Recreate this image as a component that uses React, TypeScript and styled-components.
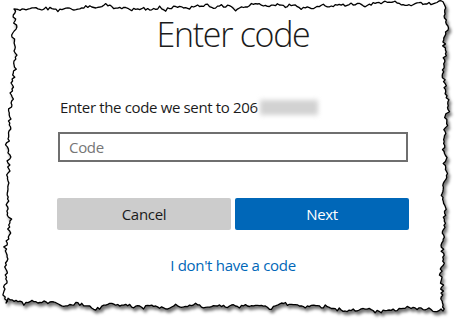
import styled, { createGlobalStyle } from 'styled-components';

const GlobalStyle = createGlobalStyle`
  html, body {
    margin: 0;
    padding: 0;
    background: #fff;
  }
  body {
    font-family: 'Open Sans', 'Liberation Sans', sans-serif;
    color: #1b1b1b;
  }
`;

// torn paper edge, drawn once from a seeded random walk
const mulberry32 = (seed: number) => () => {
  seed |= 0;
  seed = (seed + 0x6d2b79f5) | 0;
  let t = Math.imul(seed ^ (seed >>> 15), 1 | seed);
  t = (t + Math.imul(t ^ (t >>> 7), 61 | t)) ^ t;
  return ((t ^ (t >>> 14)) >>> 0) / 4294967296;
};

const rand = mulberry32(11);

const edge = (x0: number, y0: number, x1: number, y1: number, amp: number) => {
  const len = Math.hypot(x1 - x0, y1 - y0);
  const n = Math.round(len / 2);
  const nx = -(y1 - y0) / len;
  const ny = (x1 - x0) / len;
  const pts: string[] = [];
  let walk = 0;
  for (let i = 1; i <= n; i++) {
    const t = i / n;
    walk += (rand() - 0.5) * amp;
    walk *= 0.9;
    const off = i === n ? 0 : walk + (rand() - 0.5) * amp * 0.7;
    pts.push(`${(x0 + (x1 - x0) * t + nx * off).toFixed(1)},${(y0 + (y1 - y0) * t + ny * off).toFixed(1)}`);
  }
  return pts.join(' L');
};

const corners: [number, number][] = [
  [14, 9],
  [445, 6],
  [443, 311],
  [6, 303]
];

const tornPath =
  `M${corners[0][0]},${corners[0][1]} L` +
  corners
    .map((c, i) => {
      const next = corners[(i + 1) % corners.length];
      return edge(c[0], c[1], next[0], next[1], 3.2);
    })
    .join(' L') +
  ' Z';

const Page = styled.div`
  position: relative;
  width: 462px;
  height: 326px;
  overflow: hidden;
  background: #fff;
`;

const Frame = styled.svg`
  position: absolute;
  inset: 0;
`;

const Form = styled.main`
  position: relative;
  width: 352px;
  margin-left: 57px;
  padding-top: 14px;
  display: flex;
  flex-direction: column;
`;

const Title = styled.h1`
  margin: 0;
  font-size: 34px;
  font-weight: 300;
  line-height: 40px;
  letter-spacing: -1.3px;
  text-align: center;
  color: #1b1b1b;
`;

const Prompt = styled.p`
  margin: 43px 0 0 3px;
  font-size: 15px;
  line-height: 20px;
  letter-spacing: -0.35px;
  display: flex;
  align-items: center;
`;

const Smudge = styled.span`
  display: inline-block;
  width: 58px;
  height: 15px;
  margin-left: 2px;
  background: #d2d2d2;
  filter: blur(2.5px);
`;

const CodeInput = styled.input`
  box-sizing: border-box;
  width: 350px;
  height: 30px;
  margin: 15px 0 0 1px;
  padding: 0 9px;
  border: 2px solid #6f6f6f;
  background: #fff;
  font-family: inherit;
  font-size: 15px;
  letter-spacing: -0.3px;
  color: #1b1b1b;
  outline: none;

  &::placeholder {
    color: #767676;
  }
`;

const Buttons = styled.div`
  display: grid;
  grid-template-columns: 1fr 1fr;
  gap: 4px;
  margin-top: 36px;
`;

const Button = styled.button<{ $primary?: boolean }>`
  height: 32px;
  border: none;
  border-radius: 2px;
  font-family: inherit;
  font-size: 15px;
  letter-spacing: -0.3px;
  background: ${(p) => (p.$primary ? '#0067b8' : '#cccccc')};
  color: ${(p) => (p.$primary ? '#fff' : '#1b1b1b')};
  cursor: pointer;
`;

const Link = styled.a`
  margin-top: 25px;
  align-self: center;
  font-size: 15px;
  line-height: 20px;
  letter-spacing: -0.3px;
  color: #0067b8;
  text-decoration: none;
`;

export default function App() {
  return (
    <>
      <GlobalStyle />
      <Page>
        <Frame width={462} height={326} viewBox="0 0 462 326">
          <defs>
            <filter id="paperShadow" x="-5%" y="-5%" width="115%" height="115%">
              <feDropShadow dx="2" dy="3" stdDeviation="1.8" floodColor="#000" floodOpacity="0.55" />
            </filter>
          </defs>
          <path d={tornPath} fill="#fff" stroke="#000" strokeWidth={1.3} strokeLinejoin="round" filter="url(#paperShadow)" />
        </Frame>
        <Form>
          <Title>Enter code</Title>
          <Prompt>
            Enter the code we sent to 206
            <Smudge />
          </Prompt>
          <CodeInput placeholder="Code" />
          <Buttons>
            <Button>Cancel</Button>
            <Button $primary>Next</Button>
          </Buttons>
          <Link href="#">I don't have a code</Link>
        </Form>
      </Page>
    </>
  );
}
